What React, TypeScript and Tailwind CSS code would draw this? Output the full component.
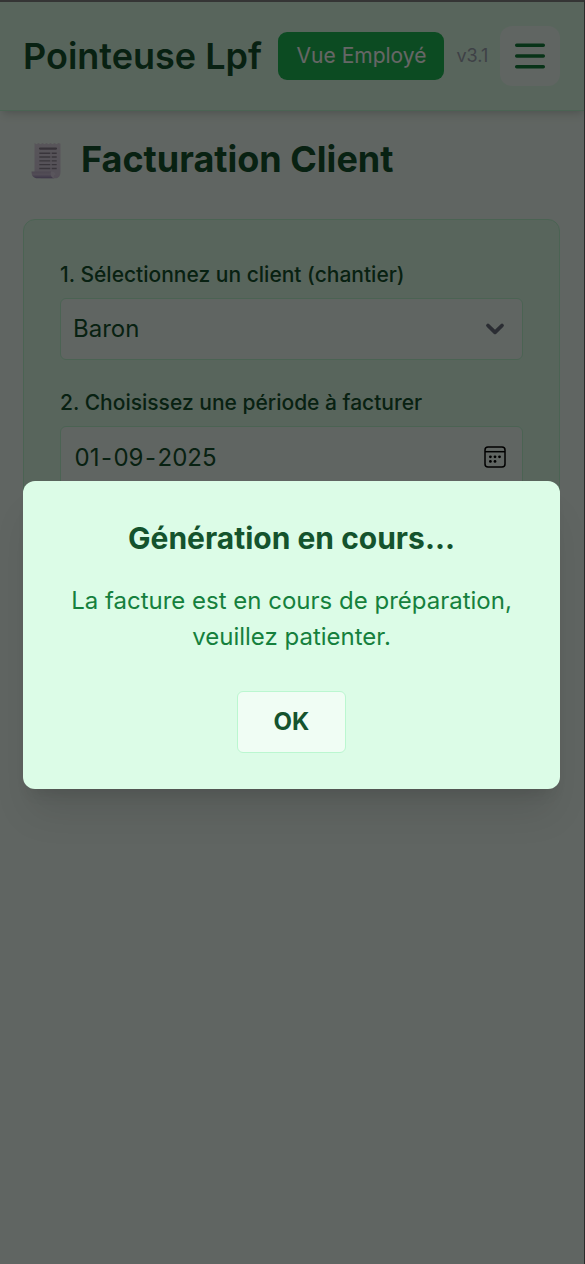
import type { ReactNode } from 'react';

function ReceiptIcon() {
  return (
    <svg width="30" height="37" viewBox="0 0 30 37" className="shrink-0">
      <defs>
        <linearGradient id="paper" x1="0" y1="0" x2="0" y2="1">
          <stop offset="0" stopColor="#dcd5e0" />
          <stop offset="1" stopColor="#d3c8dc" />
        </linearGradient>
        <linearGradient id="roll" x1="0" y1="0" x2="0" y2="1">
          <stop offset="0" stopColor="#c0b3cb" />
          <stop offset="0.45" stopColor="#cdbfd7" />
          <stop offset="1" stopColor="#9585b0" />
        </linearGradient>
      </defs>
      <path d="M3.5 1l2 1.300L7.500 1l2 1.300L11.500 1l2 1.300L15.500 1l2 1.300L19.500 1l2 1.300L23.500 1l2 1.300L27.500 1l2 .8V30c0 4-2 6.300-5 6.300H10l-6.500-5z" fill="url(#paper)" />
      <path d="M.5 29.500h20c-1 3.500 0 6 3 6.800H6.500C2.500 36.300.5 34 .5 29.500z" fill="url(#roll)" />
      <path d="M20 29.500c2.500 0 4 1 4.500 3.200-1.500 0-2.600 1.500-1 3.600-3-.8-4.500-3.300-3.500-6.800z" fill="#dfd5e5" />
      <path d="M9 6.600h16" stroke="#8a818e" strokeWidth="2.200" strokeLinecap="round" />
      <path d="M8.300 11.300h11M20.700 11.300h5M8.300 15h11M20.700 15h5M8.300 18.900h11M20.700 18.900h5M8.300 22.600h11M20.700 22.600h5M8.300 26.500h11M20.700 26.500h5" stroke="#8f8694" strokeWidth="1.400" />
    </svg>
  );
}

function CalendarIcon() {
  return (
    <svg width="24" height="24" viewBox="0 0 24 24" fill="none">
      <rect x="2" y="2" width="20" height="20" rx="3" stroke="#000" strokeWidth="1.500" />
      <path d="M2 6.700h20" stroke="#000" strokeWidth="1.500" />
      <g fill="#000">
        <circle cx="7.400" cy="11.800" r="1.400" />
        <circle cx="12" cy="11.800" r="1.400" />
        <circle cx="16.500" cy="11.800" r="1.400" />
        <circle cx="7.400" cy="16.400" r="1.400" />
        <circle cx="12" cy="16.400" r="1.400" />
      </g>
    </svg>
  );
}

function Field({ label, children }: { label: string; children: ReactNode }) {
  return (
    <div>
      <div className="mb-[5px] pt-px text-[21px] leading-9 font-medium text-[#14532d]">{label}</div>
      <div className="flex h-[62px] items-center justify-between rounded-md border border-[#bbf7d0] bg-[#f0fdf4] pl-3 text-2xl text-[#14532d]">
        {children}
      </div>
    </div>
  );
}

export default function App() {
  return (
    <div className="relative h-[1264px] w-[585px] overflow-hidden bg-[#f0fdf4] font-['Inter',sans-serif] text-[#14532d]">
      <header className="mt-0.5 flex h-[109px] items-center border-b border-[#bbf7d0] bg-[#dcfce7] px-[23px] shadow-[0_6px_9px_-1.5px_rgba(0,0,0,0.1),0_3px_6px_-3px_rgba(0,0,0,0.1)]">
        <h1 className="w-[255px] shrink-0 text-4xl font-semibold whitespace-nowrap">Pointeuse Lpf</h1>
        <button className="h-12 w-[166px] shrink-0 rounded-[9px] bg-[#20bc55] pl-px text-[21px] text-white">Vue Employé</button>
        <span className="ml-[12.5px] w-[43.5px] text-lg text-[#9ca3af]">v3.1</span>
        <button className="flex h-[60px] w-[60px] shrink-0 items-center justify-center rounded-xl bg-[#f0fdf4]">
          <svg width="36" height="36" viewBox="0 0 36 36" stroke="#15803d" strokeWidth="3.500" strokeLinecap="round">
            <path d="M4.700 7.300h26.600M4.700 18h26.600M4.700 28.700h26.600" />
          </svg>
        </button>
      </header>

      <main className="px-[23px]">
        <div className="mt-[25px] flex h-[45px] items-center">
          <div className="w-[58px] pt-[3px] pl-2"><ReceiptIcon /></div>
          <h2 className="text-4xl font-bold whitespace-nowrap">Facturation Client</h2>
        </div>
        <section className="mt-[38px] flex h-[500px] w-[537px] flex-col gap-6 rounded-xl border border-[#bbf7d0] bg-[#dcfce7] p-9">
          <Field label="1. Sélectionnez un client (chantier)">
            <span>Baron</span>
            <svg width="24" height="24" viewBox="0 0 24 24" className="mr-[15px]" fill="none" stroke="#6b7280" strokeWidth="3.800" strokeLinecap="round" strokeLinejoin="round">
              <path d="M5 8.500l7 6.800 7-6.800" />
            </svg>
          </Field>
          <Field label="2. Choisissez une période à facturer">
            <span className="flex pt-0.5 pl-[1.5px]">
              <span>01</span>
              <span className="px-[1.5px]">-</span>
              <span>09</span>
              <span className="px-[1.5px]">-</span>
              <span>2025</span>
            </span>
            <span className="mr-[15px]"><CalendarIcon /></span>
          </Field>
        </section>
      </main>

      <div className="absolute inset-0 flex items-start bg-black/60 px-[23px] pt-[481px]">
        <div className="flex h-[308px] w-[537px] flex-col items-center rounded-xl bg-[#dcfce7] p-9 text-center shadow-[0_30px_38px_-8px_rgba(0,0,0,0.1),0_12px_15px_-9px_rgba(0,0,0,0.1)]">
          <h3 className="mb-6 text-3xl leading-[42px] font-bold">Génération en cours...</h3>
          <p className="text-2xl leading-9 text-[#15803d]">La facture est en cours de préparation, veuillez patienter.</p>
          <button className="mt-9 h-[62px] w-[109px] shrink-0 rounded-md border border-[#bbf7d0] bg-[#f0fdf4] text-2xl font-bold">OK</button>
        </div>
      </div>
      <div className="pointer-events-none absolute inset-0 border-t-2 border-r border-t-[#353535] border-r-[#2b2b2b]" />
    </div>
  );
}
